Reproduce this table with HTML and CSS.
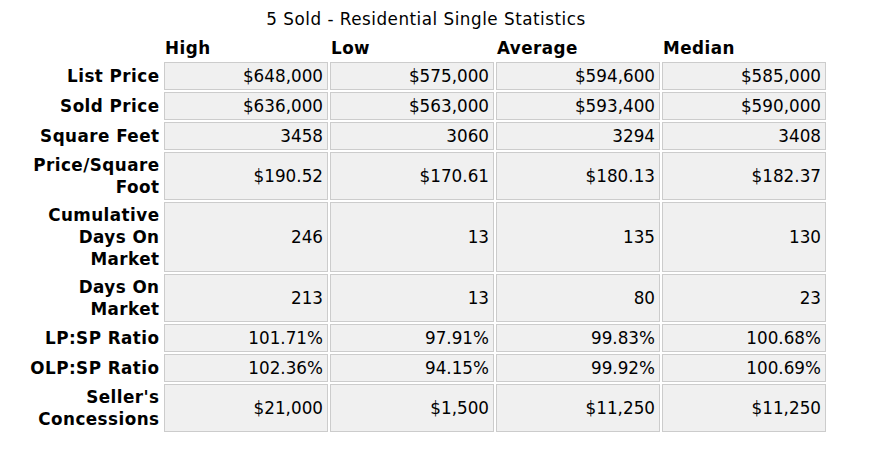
FILE: index.html
```html
<!DOCTYPE html>
<html>
<head>
<meta charset="utf-8">
<link rel="stylesheet" href="styles.css">
</head>
<body>
<table class="stats">
  <caption>5 Sold - Residential Single Statistics</caption>
  <thead>
    <tr>
      <th class="corner"></th>
      <th class="colhead">High</th>
      <th class="colhead">Low</th>
      <th class="colhead">Average</th>
      <th class="colhead">Median</th>
    </tr>
  </thead>
  <tbody>
    <tr><th class="label">List Price</th><td>$648,000</td><td>$575,000</td><td>$594,600</td><td>$585,000</td></tr>
    <tr><th class="label">Sold Price</th><td>$636,000</td><td>$563,000</td><td>$593,400</td><td>$590,000</td></tr>
    <tr><th class="label">Square Feet</th><td>3458</td><td>3060</td><td>3294</td><td>3408</td></tr>
    <tr><th class="label">Price/Square Foot</th><td>$190.52</td><td>$170.61</td><td>$180.13</td><td>$182.37</td></tr>
    <tr><th class="label">Cumulative Days On Market</th><td>246</td><td>13</td><td>135</td><td>130</td></tr>
    <tr><th class="label">Days On Market</th><td>213</td><td>13</td><td>80</td><td>23</td></tr>
    <tr><th class="label">LP:SP Ratio</th><td>101.71%</td><td>97.91%</td><td>99.83%</td><td>100.68%</td></tr>
    <tr><th class="label">OLP:SP Ratio</th><td>102.36%</td><td>94.15%</td><td>99.92%</td><td>100.69%</td></tr>
    <tr><th class="label">Seller's Concessions</th><td>$21,000</td><td>$1,500</td><td>$11,250</td><td>$11,250</td></tr>
  </tbody>
</table>
</body>
</html>
```

FILE: styles.css
```css
html, body {
  background: #ffffff;
}
body {
  margin: 8px;
  font-family: "DejaVu Sans", Verdana, sans-serif;
  font-size: 16.8px;
  line-height: 20.4px;
  color: #000000;
}
.stats {
  table-layout: fixed;
  width: 804px;
  margin-left: 16px;
  border-collapse: separate;
  border-spacing: 2px;
}
.stats caption {
  caption-side: top;
  text-align: center;
  font-weight: normal;
  letter-spacing: 0.5px;
  padding: 1px 0 5px;
}
.stats th,
.stats td {
  box-sizing: border-box;
}
.corner {
  width: 136px;
  padding: 0;
}
.colhead {
  width: 164px;
  text-align: left;
  font-weight: bold;
  letter-spacing: 0.45px;
  padding: 1.6px 1px;
  vertical-align: bottom;
}
.label {
  text-align: right;
  font-weight: bold;
  letter-spacing: 0.45px;
  line-height: 22px;
  padding: 2px 2.5px 2px 0;
  vertical-align: middle;
}
.stats td {
  text-align: right;
  background: #f0f0f0;
  border: 1px solid #cccccc;
  padding: 2.8px 4px;
  vertical-align: middle;
}
```
